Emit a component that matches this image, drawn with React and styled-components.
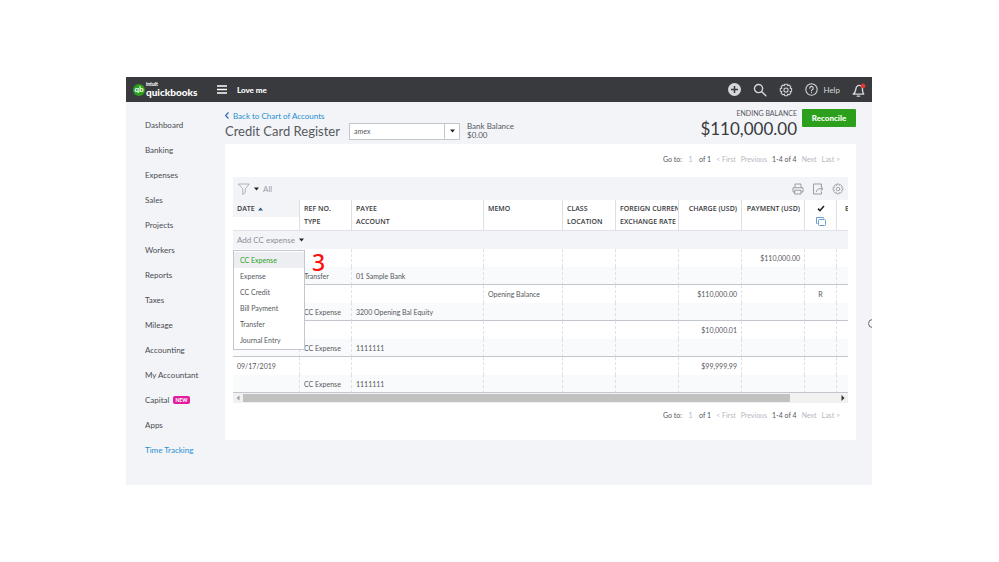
import React, { useState } from 'react';
import styled, { createGlobalStyle, css } from 'styled-components';

const GlobalStyle = createGlobalStyle`
  * {
    box-sizing: border-box;
  }
  body {
    margin: 0;
    background: white;
    color: #55585d;
    font-family: Lato, sans-serif;
    font-size: 8px;
    line-height: 10px;
  }
  button,
  input,
  select {
    font: inherit;
    color: inherit;
    margin: 0;
    padding: 0;
    border: 0;
    background: none;
  }
  a {
    text-decoration: none;
  }
`;

const Page = styled.div`
  padding: 77px 127px 77px 126px;
`;

const Frame = styled.div`
  position: relative;
  overflow: hidden;
  background: #f3f4f8;
`;

const TopBar = styled.header`
  display: flex;
  align-items: center;
  height: 25px;
  padding: 0 6px 0 7px;
  background: #393a3d;
  color: white;
`;

const Logo = styled.a`
  display: flex;
  align-items: center;
  gap: 1px;
  width: 84px;
  color: white;
`;

const LogoMark = styled.span`
  width: 12px;
  height: 12px;
  border-radius: 50%;
  background: #2ca01c;
  font-size: 8px;
  font-weight: 700;
  line-height: 11px;
  text-align: center;
`;

const LogoText = styled.span`
  display: flex;
  flex-direction: column;
  font-size: 10px;
  font-weight: 900;
  line-height: 10px;
  small {
    font-size: 5px;
    line-height: 5px;
  }
`;

const MenuButton = styled.button`
  display: flex;
  width: 20px;
`;

const Company = styled.strong`
  flex: 1;
  font-weight: 900;
`;

const TopActions = styled.div`
  display: flex;
  align-items: center;
  gap: 12px;
  color: #d4d7dc;
  button {
    display: flex;
    align-items: center;
    gap: 5px;
  }
`;

const Body = styled.div`
  display: flex;
`;

const SideNav = styled.nav`
  flex: none;
  width: 99px;
  padding: 10px 0 0 19px;
`;

const SideLink = styled.a`
  display: flex;
  align-items: center;
  gap: 4px;
  height: 25px;
  color: ${props => (props.$active ? '#1d8fd1' : '#4a4c50')};
`;

const NewBadge = styled.span`
  padding: 0 2px;
  border-radius: 2px;
  background: #e31c9e;
  color: white;
  font-size: 5px;
  font-weight: 900;
  line-height: 8px;
`;

const Main = styled.main`
  flex: 1;
  min-width: 0;
  padding: 0 16px 45px 0;
`;

const PageHead = styled.div`
  display: flex;
  justify-content: space-between;
  height: 42px;
  padding-top: 7px;
`;

const BackLink = styled.a`
  display: flex;
  align-items: center;
  gap: 4px;
  height: 13px;
  color: #1d8fd1;
`;

const TitleRow = styled.div`
  display: flex;
  align-items: center;
  height: 18px;
`;

const Title = styled.h1`
  margin: 0;
  font-size: 13px;
  font-weight: 400;
  white-space: nowrap;
  width: 124px;
`;

const SelectBox = styled.label`
  display: grid;
  grid-template-columns: 94px 15px;
  align-items: center;
  height: 17px;
  margin-right: 7px;
  border: 1px solid #c3c6cc;
  background: white;
  select {
    grid-area: 1 / 1 / 2 / 3;
    height: 15px;
    padding-left: 4px;
    appearance: none;
    font-size: 7px;
  }
  span {
    grid-area: 1 / 2;
    display: flex;
    align-items: center;
    justify-content: center;
    height: 15px;
    border-left: 1px solid #c3c6cc;
    pointer-events: none;
  }
`;

const BankBalance = styled.div`
  line-height: 9px;
`;

const HeadRight = styled.div`
  display: flex;
  align-items: flex-start;
  gap: 5px;
`;

const EndingBalance = styled.div`
  text-align: right;
  text-transform: uppercase;
  font-size: 7px;
  line-height: 8px;
  strong {
    display: block;
    color: #393a3d;
    font-size: 17px;
    font-weight: 400;
    line-height: 24px;
  }
`;

const ReconcileButton = styled.button`
  width: 54px;
  height: 18px;
  border-radius: 1px;
  background: #2ca01c;
  color: white;
  font-weight: 900;
`;

const Panel = styled.section`
  padding: 0 8px 20px;
  background: white;
`;

const PagerBar = styled.div`
  display: flex;
  justify-content: flex-end;
  gap: 5px;
  padding: ${props => (props.$top ? '10px 8px 13px' : '7px 8px 0')};
  font-size: 7px;
  white-space: nowrap;
  label {
    display: flex;
    gap: 5px;
  }
  input {
    width: 7px;
    text-align: center;
  }
  input,
  button {
    color: #b5b8bf;
  }
`;

const Toolbar = styled.div`
  display: flex;
  align-items: center;
  justify-content: space-between;
  height: 23px;
  padding: 0 4px 0 5px;
  background: #f3f4f8;
  color: #9a9da4;
`;

const ToolGroup = styled.div`
  display: flex;
  align-items: center;
  gap: ${props => (props.$wide ? '8px' : '4px')};
  button {
    display: flex;
    align-items: center;
    gap: 4px;
  }
`;

const GridScroll = styled.div`
  position: relative;
  overflow: hidden;
`;

const Grid = styled.table`
  width: 100%;
  min-width: 560px;
  table-layout: fixed;
  border-collapse: separate;
  border-spacing: 0;
  font-size: 7px;
`;

const HeadCell = styled.th`
  height: 31px;
  padding: 2px 4px 0 ${props => (props.$indent ? '8px' : '4px')};
  overflow: hidden;
  border-bottom: 1px solid #dfe2e8;
  border-left: 1px solid #dcdfe4;
  color: #393a3d;
  font-family: 'Open Sans', sans-serif;
  font-weight: 600;
  line-height: 13px;
  text-align: ${props => props.$align || 'left'};
  vertical-align: top;
  white-space: nowrap;
  &:first-child {
    border-left: 0;
    background: linear-gradient(#f3f4f8 17px, white 17px);
  }
`;

const HeadLine = styled.div`
  display: flex;
  align-items: center;
  justify-content: ${props => props.$justify || 'flex-start'};
  gap: 3px;
  height: 13px;
`;

const AddCell = styled.td`
  height: 18px;
  padding: 0 4px;
  background: #f3f4f8;
  button {
    display: flex;
    align-items: center;
    gap: 4px;
    color: #8d9096;
    font-size: 8px;
  }
`;

const Cell = styled.td`
  height: 18px;
  padding: 0 4px;
  overflow: hidden;
  border-left: 1px dashed #dfe1e5;
  text-align: ${props => props.$align || 'left'};
  white-space: nowrap;
  &:first-child {
    border-left: 0;
  }
  ${props =>
    props.$lower &&
    css`
      border-bottom: 1px solid #c3c6cc;
      background: #f9fafb;
    `}
`;

const Menu = styled.ul`
  position: absolute;
  top: 50px;
  left: 0;
  width: 72px;
  margin: 0;
  padding: 1px 0;
  list-style: none;
  border: 1px solid #c3c6cc;
  background: white;
`;

const MenuItem = styled.button`
  display: block;
  width: 100%;
  height: 16px;
  padding-left: 6px;
  background: ${props => (props.$active ? '#eceef1' : 'white')};
  color: ${props => (props.$active ? '#2ca01c' : '#55585d')};
  font-size: 7px;
  text-align: left;
`;

const StepNumber = styled.span`
  position: absolute;
  top: 50px;
  left: 79px;
  color: #fb0f0f;
  font-family: 'Noto Sans', sans-serif;
  font-size: 23px;
  font-weight: 500;
  line-height: 24px;
`;

const ScrollBar = styled.div`
  display: flex;
  height: 10px;
  background: #f1f1f1;
  button {
    display: flex;
    align-items: center;
    justify-content: center;
    width: 10px;
  }
`;

const ScrollTrack = styled.div`
  flex: 1;
  padding: 1px 0;
`;

const ScrollThumb = styled.div`
  width: 92%;
  height: 8px;
  background: #c1c1c1;
`;

const EdgeHandle = styled.span`
  position: absolute;
  top: 242px;
  right: -5px;
  width: 9px;
  height: 9px;
  border: 1px solid #6b6c72;
  border-radius: 50%;
`;

const Caret = ({ up }) => (
  <svg width="5" height="4" viewBox="0 0 5 4">
    <path
      d={up ? 'M0 3.5h5L2.5.5z' : 'M0 .5h5L2.5 3.5z'}
      fill={up ? '#2b5f8f' : '#222'}
    />
  </svg>
);

const Arrow = ({ left, color }) => (
  <svg width="4" height="6" viewBox="0 0 4 6">
    <path d={left ? 'M3.5.5v5L.5 3z' : 'M.5 0v6L3.5 3z'} fill={color} />
  </svg>
);

const Icon = ({ size, width = 1.5, children }) => (
  <svg
    width={size}
    height={size}
    viewBox="0 0 24 24"
    fill="none"
    stroke="currentColor"
    strokeWidth={width}
    strokeLinecap="round"
    strokeLinejoin="round"
  >
    {children}
  </svg>
);

const Gear = ({ size }) => (
  <Icon size={size} width={1.8}>
    <path d="M9.8 2h4.4l.6 2.7 2.4-1.4 3.1 3.1-1.4 2.4 2.7.8v4.4l-2.7.7 1.4 2.5-3.1 3.1-2.4-1.4-.6 2.8H9.8l-.7-2.8-2.4 1.4-3.1-3.1L5 14.7 2.2 14V9.6L5 8.8 3.6 6.4l3.1-3.1 2.4 1.4z" />
    <circle cx="12" cy="12" r="3.6" />
  </Icon>
);

const navItems = [
  'Dashboard',
  'Banking',
  'Expenses',
  'Sales',
  'Projects',
  'Workers',
  'Reports',
  'Taxes',
  'Mileage',
  'Accounting',
  'My Accountant',
  'Capital',
  'Apps',
  'Time Tracking'
];

const menuItems = [
  'CC Expense',
  'Expense',
  'CC Credit',
  'Bill Payment',
  'Transfer',
  'Journal Entry'
];

// the payee column has no width and takes what is left
const columns = [
  { key: 'date', width: 66 },
  { key: 'type', width: 52, lines: ['REF NO.', 'TYPE'] },
  { key: 'payee', lines: ['PAYEE', 'ACCOUNT'] },
  { key: 'memo', width: 79, lines: ['MEMO'] },
  { key: 'class', width: 53, lines: ['CLASS', 'LOCATION'] },
  { key: 'rate', width: 63, lines: ['FOREIGN CURRENCY', 'EXCHANGE RATE'] },
  { key: 'charge', width: 63, lines: ['CHARGE (USD)'], align: 'right' },
  { key: 'payment', width: 63, lines: ['PAYMENT (USD)'], align: 'right' },
  { key: 'status', width: 32, align: 'center' },
  { key: 'balance', width: 12, lines: ['BALANCE'], indent: true }
];

const records = [
  { payment: '$110,000.00', type: 'Transfer', account: '01 Sample Bank' },
  {
    memo: 'Opening Balance',
    charge: '$110,000.00',
    status: 'R',
    type: 'CC Expense',
    account: '3200 Opening Bal Equity'
  },
  { charge: '$10,000.01', type: 'CC Expense', account: '1111111' },
  {
    date: '09/17/2019',
    charge: '$99,999.99',
    type: 'CC Expense',
    account: '1111111'
  }
];

const Pager = ({ id, top }) => (
  <PagerBar $top={top}>
    <label htmlFor={id}>
      Go to:
      <input id={id} defaultValue="1" />
    </label>
    <span>of 1</span>
    <button type="button">&lt; First</button>
    <button type="button">Previous</button>
    <span>1-4 of 4</span>
    <button type="button">Next</button>
    <button type="button">Last &gt;</button>
  </PagerBar>
);

const Header = () => (
  <TopBar>
    <Logo href="#home">
      <LogoMark>qb</LogoMark>
      <LogoText>
        <small>intuit</small>
        quickbooks
      </LogoText>
    </Logo>
    <MenuButton type="button" aria-label="Menu">
      <svg width="10" height="9" viewBox="0 0 10 9">
        <path d="M0 1h10M0 4.5h10M0 8h10" stroke="white" strokeWidth="1.4" />
      </svg>
    </MenuButton>
    <Company>Love me</Company>
    <TopActions>
      <button type="button" aria-label="Create">
        <svg width="13" height="13" viewBox="0 0 13 13">
          <circle cx="6.5" cy="6.5" r="6.5" fill="#d4d7dc" />
          <path d="M6.5 3v7M3 6.5h7" stroke="#393a3d" strokeWidth="1.5" />
        </svg>
      </button>
      <button type="button" aria-label="Search">
        <Icon size={14} width={2.4}>
          <circle cx="9.5" cy="9.5" r="7" />
          <path d="M15 15l7 7" />
        </Icon>
      </button>
      <button type="button" aria-label="Settings">
        <Gear size={14} />
      </button>
      <button type="button">
        <Icon size={13} width={2}>
          <circle cx="12" cy="12" r="10.5" />
          <path d="M8.8 9.5a3.2 3.2 0 1 1 4.6 2.8c-1 .5-1.4 1-1.4 2.2M12 17.6v.3" />
        </Icon>
        Help
      </button>
      <button type="button" aria-label="Notifications">
        <Icon size={14} width={2.4}>
          <path d="M2 19c3-2 4-4 4.500-8C7 6.500 9 4 12.500 4s6 3 5.500 8c-.2 3 .5 5 2 7z" />
          <path d="M9 22.500h4" />
          <circle cx="19" cy="5" r="4" fill="#e43834" stroke="none" />
        </Icon>
      </button>
    </TopActions>
  </TopBar>
);

const Register = () => {
  const [open, setOpen] = useState(true);

  return (
    <GridScroll>
      <Grid>
        <colgroup>
          {columns.map(col => (
            <col key={col.key} width={col.width} />
          ))}
        </colgroup>
        <thead>
          <tr>
            {columns.map(col => (
              <HeadCell key={col.key} $align={col.align} $indent={col.indent}>
                {col.key === 'date' && (
                  <HeadLine>
                    DATE <Caret up />
                  </HeadLine>
                )}
                {col.key === 'status' && (
                  <>
                    <HeadLine $justify="center">
                      <svg width="8" height="7" viewBox="0 0 8 7">
                        <path
                          d="M1 3.6l2 2L7 1"
                          fill="none"
                          stroke="#222"
                          strokeWidth="1.5"
                        />
                      </svg>
                    </HeadLine>
                    <HeadLine $justify="center">
                      <svg width="10" height="9" viewBox="0 0 10 9">
                        <g fill="none" stroke="#6a9ccb">
                          <path d="M1.5 6.5h-1v-6h7v1" />
                          <rect x="2.5" y="2.5" width="7" height="6" rx="1" />
                        </g>
                      </svg>
                    </HeadLine>
                  </>
                )}
                {col.lines &&
                  col.lines.map(line => <div key={line}>{line}</div>)}
              </HeadCell>
            ))}
          </tr>
        </thead>
        <tbody>
          <tr>
            <AddCell colSpan={columns.length}>
              <button type="button" onClick={() => setOpen(!open)}>
                Add CC expense <Caret />
              </button>
            </AddCell>
          </tr>
          {records.map((record, i) => (
            <React.Fragment key={i}>
              <tr>
                {columns.map(col => (
                  <Cell key={col.key} $align={col.align}>
                    {col.key !== 'type' && record[col.key]}
                  </Cell>
                ))}
              </tr>
              <tr>
                {columns.map(col => (
                  <Cell key={col.key} $lower>
                    {col.key === 'type' && record.type}
                    {col.key === 'payee' && record.account}
                  </Cell>
                ))}
              </tr>
            </React.Fragment>
          ))}
        </tbody>
      </Grid>
      {open && (
        <Menu>
          {menuItems.map((item, i) => (
            <li key={item}>
              <MenuItem type="button" $active={i === 0}>
                {item}
              </MenuItem>
            </li>
          ))}
        </Menu>
      )}
      <StepNumber>3</StepNumber>
    </GridScroll>
  );
};

const App = () => (
  <Page>
    <GlobalStyle />
    <Frame>
      <Header />
      <Body>
        <SideNav>
          {navItems.map(item => (
            <SideLink
              key={item}
              href="#register"
              $active={item === 'Time Tracking'}
            >
              {item}
              {item === 'Capital' && <NewBadge>NEW</NewBadge>}
            </SideLink>
          ))}
        </SideNav>
        <Main>
          <PageHead>
            <div>
              <BackLink href="#accounts">
                <svg width="4" height="7" viewBox="0 0 4 7">
                  <path
                    d="M3.5.5l-3 3 3 3"
                    fill="none"
                    stroke="#2c62b8"
                    strokeWidth="1.2"
                  />
                </svg>
                Back to Chart of Accounts
              </BackLink>
              <TitleRow>
                <Title>Credit Card Register</Title>
                <SelectBox>
                  <select aria-label="Account">
                    <option>amex</option>
                  </select>
                  <span>
                    <Caret />
                  </span>
                </SelectBox>
                <BankBalance>
                  Bank Balance
                  <br />
                  $0.00
                </BankBalance>
              </TitleRow>
            </div>
            <HeadRight>
              <EndingBalance>
                Ending Balance
                <strong>$110,000.00</strong>
              </EndingBalance>
              <ReconcileButton type="button">Reconcile</ReconcileButton>
            </HeadRight>
          </PageHead>
          <Panel>
            <Pager id="page-top" top />
            <Toolbar>
              <ToolGroup>
                <button type="button" aria-label="Filter">
                  <Icon size={12}>
                    <path d="M1.5 2h21l-8 10v7l-5 4V12z" />
                  </Icon>
                  <Caret />
                </button>
                <span>All</span>
              </ToolGroup>
              <ToolGroup $wide>
                <button type="button" aria-label="Print">
                  <Icon size={12} width={2}>
                    <path d="M6 9V2h12v7M6 18H2V9.5h20V18h-4" />
                    <path d="M6 14.5h12V22H6z" />
                  </Icon>
                </button>
                <button type="button" aria-label="Export">
                  <Icon size={12} width={2}>
                    <path d="M19 7V2H3v20h16v-4" />
                    <path d="M9 17c.5-4 3-5.5 7-5.5h5M18 8l4 3.5-4 3.5" />
                  </Icon>
                </button>
                <button type="button" aria-label="Grid settings">
                  <Gear size={12} />
                </button>
              </ToolGroup>
            </Toolbar>
            <Register />
            <ScrollBar>
              <button type="button" aria-label="Scroll left">
                <Arrow left color="#9a9da4" />
              </button>
              <ScrollTrack>
                <ScrollThumb />
              </ScrollTrack>
              <button type="button" aria-label="Scroll right">
                <Arrow color="#333" />
              </button>
            </ScrollBar>
            <Pager id="page-bottom" />
          </Panel>
        </Main>
      </Body>
      <EdgeHandle />
    </Frame>
  </Page>
);

export default App;
